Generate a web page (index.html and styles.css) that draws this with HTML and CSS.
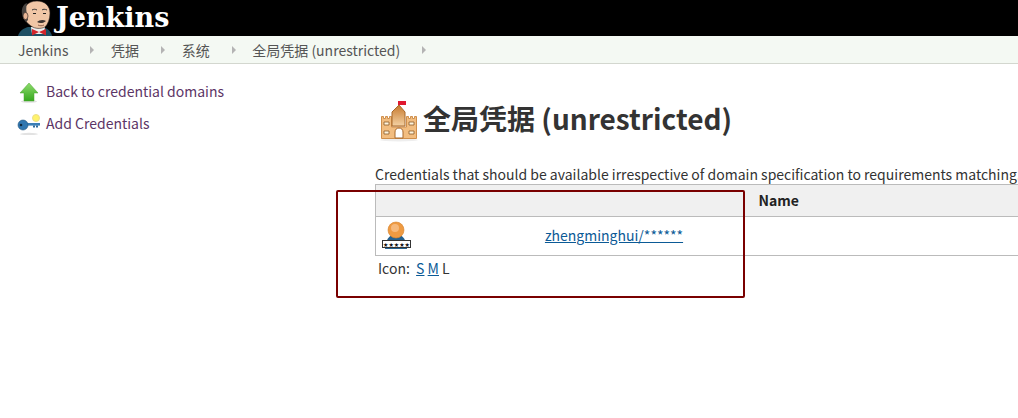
FILE: index.html
```html
<!DOCTYPE html>
<html lang="zh-CN">
<head>
<meta charset="utf-8">
<title>Jenkins</title>
<link rel="stylesheet" href="styles.css">
</head>
<body>
<header class="top">
  <svg class="butler" width="38" height="36" viewBox="0 0 38 36">
    <path d="M1 36c1-5 6-8 10-9h15c4 1 8 4 9 9z" fill="#1d4f63"/>
    <path d="M14 27h14l-1 7H15z" fill="#eee"/>
    <path d="M15 29l7 3-7 3.500zM29 29l-7 3 7 3.500z" fill="#d2242a"/>
    <path d="M7 17C5 8 10 1 20 1c8 0 13 5 13 12 0 6-2 11-5 14-4 2-10 2-14-1-3-2-6-5-7-9z" fill="#f0c6a6" stroke="#2a211e" stroke-width=".6"/>
    <path d="M8 21C3 14 4 5 10 3c-1 4-1 8 0 11l1 6-2 2z" fill="#46423f"/>
    <ellipse cx="8.500" cy="16" rx="2.500" ry="3.500" fill="#e8b595" stroke="#3a2e2a" stroke-width=".7"/>
    <path d="M15 10c2-1 3-1 5 0M25 10c1-1 3-1 5 0" stroke="#333" stroke-width="1" fill="none"/>
    <path d="M16 13.500h3M26 13.500h3" stroke="#222" stroke-width="1.200"/>
    <path d="M20 22c2-2 6-3 9-1-2 2-6 3-9 1z" fill="#3d3431"/>
    <path d="M21 25c2 1 4 1 6 0" stroke="#7a4a3a" stroke-width=".8" fill="none"/>
  </svg>
  <span class="brand">Jenkins</span>
</header>
<nav class="crumbs">
  <a class="crumb">Jenkins</a><span class="arrow"></span>
  <a class="crumb">凭据</a><span class="arrow"></span>
  <a class="crumb">系统</a><span class="arrow"></span>
  <a class="crumb">全局凭据 (unrestricted)</a><span class="arrow"></span>
</nav>
<div class="page">
  <aside class="side">
    <a class="task">
      <svg width="24" height="24" viewBox="0 0 24 24">
        <defs>
          <linearGradient id="up" x1="0" y1="0" x2="0" y2="1">
            <stop offset="0" stop-color="#8fdc6e"/>
            <stop offset="1" stop-color="#36a81e"/>
          </linearGradient>
        </defs>
        <ellipse cx="12" cy="22.500" rx="8" ry="1.300" fill="#e0e0e0"/>
        <path d="M12 4l9 10h-4v8H7v-8H3z" fill="url(#up)" stroke="#4aa52c" stroke-width=".5"/>
      </svg>
      <span>Back to credential domains</span>
    </a>
    <a class="task">
      <svg width="24" height="24" viewBox="0 0 24 24">
        <ellipse cx="12" cy="23" rx="9" ry="1.200" fill="#e2e2e2"/>
        <circle cx="19" cy="7" r="3.500" fill="#fff36b" stroke="#ecdf8a"/>
        <rect x="8" y="12" width="15" height="2.600" fill="#3b7fb6"/>
        <path d="M16 14.500h2v2h-2zM19 14.500h2v2h-2z" fill="#2f6b9c"/>
        <circle cx="6" cy="14" r="5" fill="#2f76b0" stroke="#24567f" stroke-width=".6"/>
        <circle cx="4" cy="14" r="1.300" fill="#10283d"/>
      </svg>
      <span>Add Credentials</span>
    </a>
  </aside>
  <main class="main">
    <h1 class="title">
      <svg width="48" height="48" viewBox="0 0 48 48">
        <defs>
          <linearGradient id="keep" x1="0" y1="0" x2="0" y2="1">
            <stop offset="0" stop-color="#c6782c"/>
            <stop offset="1" stop-color="#f4d2a4"/>
          </linearGradient>
        </defs>
        <ellipse cx="24" cy="46" rx="19" ry="1.500" fill="#eee"/>
        <path d="M23 7h8v4h-8z" fill="#e01830"/>
        <path d="M6.500 22.500h2v2h2v-2h2v2h2v-2h2V33h15V22.500h2v2h2v-2h2v2h2v-2h2v22h-35z" fill="#f2bd80" stroke="#cf8f4c"/>
        <path d="M24 11l-7 7v14h13V18z" fill="url(#keep)" stroke="#a8682a"/>
        <path d="M20 44v-6c0-2.500 1.700-4 4-4s4 1.500 4 4v6z" fill="#fff" stroke="#a8682a"/>
        <path d="M9 28h5v3H9zM34 28h5v3h-5zM9 37h5v3H9zM34 37h5v3h-5z" fill="#fff4dc" stroke="#8a5a2a" stroke-width=".8"/>
      </svg>
      <span>全局凭据 (unrestricted)</span>
    </h1>
    <p class="desc">Credentials that should be available irrespective of domain specification to requirements matching.</p>
    <table class="grid">
      <colgroup>
        <col class="col-icon">
        <col class="col-name">
        <col>
      </colgroup>
      <thead>
        <tr><th></th><th colspan="2" class="name-head">Name</th></tr>
      </thead>
      <tbody>
        <tr>
          <td class="icon-cell">
            <svg class="cred" width="32" height="32" viewBox="0 0 32 32">
              <path d="M4 29c0-8 4-15 11-15s11 7 11 15z" fill="#24618f"/>
              <circle cx="15" cy="10" r="8" fill="#ee9a42" stroke="#d68229" stroke-width=".6"/>
              <circle cx="14" cy="8" r="4" fill="#f6b97c"/>
              <rect x="1.500" y="20.500" width="28" height="7" fill="#fff" stroke="#333"/>
              <text class="stars" x="15.500" y="26.500" text-anchor="middle">★★★★★</text>
            </svg>
          </td>
          <td class="name-cell"><a class="link">zhengminghui/******</a></td>
          <td></td>
        </tr>
      </tbody>
    </table>
    <div class="sizes">Icon:&nbsp; <a class="link">S</a> <a class="link">M</a> L</div>
  </main>
</div>
<div class="mark"></div>
</body>
</html>
```

FILE: styles.css
```css
* { box-sizing: border-box; }
html, body { margin: 0; height: 100%; overflow: hidden; background: #fff; }
body {
  position: relative;
  font-family: "Noto Sans CJK SC", "Noto Sans", sans-serif;
  font-size: 14px;
  color: #333;
}
.top {
  height: 36px;
  background: #000;
  display: flex;
  align-items: center;
  padding-left: 17px;
  overflow: hidden;
}
.butler { flex: none; display: block; }
.brand {
  margin-left: 1px;
  font-family: "DejaVu Serif", serif;
  font-weight: 700;
  font-size: 27px;
  line-height: 30px;
  color: #fff;
}
.crumbs {
  height: 28px;
  background: #f4f9f3;
  border-bottom: 1px solid #d3d7cf;
  display: flex;
  align-items: center;
  padding-left: 18px;
  color: #555;
}
.arrow {
  width: 0;
  height: 0;
  margin: 0 16.600px 0 22px;
  border-left: 4px solid #b4b4b4;
  border-top: 4px solid transparent;
  border-bottom: 4px solid transparent;
}
.page { display: flex; }
.side {
  width: 375px;
  flex: none;
  padding: 15px 0 0 17px;
}
.task {
  display: flex;
  align-items: center;
  gap: 5px;
  height: 24px;
  margin-bottom: 8px;
  color: #5c3566;
}
.main { flex: none; width: 800px; padding-top: 30px; }
.title {
  margin: 0;
  display: flex;
  align-items: center;
  height: 48px;
  font-size: 28px;
  font-weight: 700;
  color: #333;
}
.desc {
  margin: 22px 0 0;
  white-space: nowrap;
  line-height: 20px;
  height: 20px;
}
.grid {
  width: 768px;
  border-collapse: collapse;
  border: 1px solid #bbb;
  table-layout: fixed;
}
.col-icon { width: 40px; }
.col-name { width: 397px; }
.grid th {
  height: 32px;
  padding: 0;
  background: #f0f0f0;
  font-weight: 700;
  color: #222;
  border-bottom: 1px solid #bbb;
}
.grid th.name-head { padding-bottom: 2px; }
.grid td { height: 39px; padding: 0; }
.grid tbody tr { border-bottom: 1px solid #bbb; }
.grid td.icon-cell { padding-left: 5px; vertical-align: middle; }
.cred { display: block; }
.stars { font: 6px "DejaVu Sans", sans-serif; fill: #111; }
.grid td.name-cell { text-align: center; padding-bottom: 2px; }
.link { color: #0b5a96; text-decoration: underline; }
.sizes { margin: 2px 0 0 3px; line-height: 20px; white-space: pre; }
.mark {
  position: absolute;
  left: 336px;
  top: 190px;
  width: 409px;
  height: 108px;
  border: 2px solid #7a0000;
  border-radius: 2px;
}
```
